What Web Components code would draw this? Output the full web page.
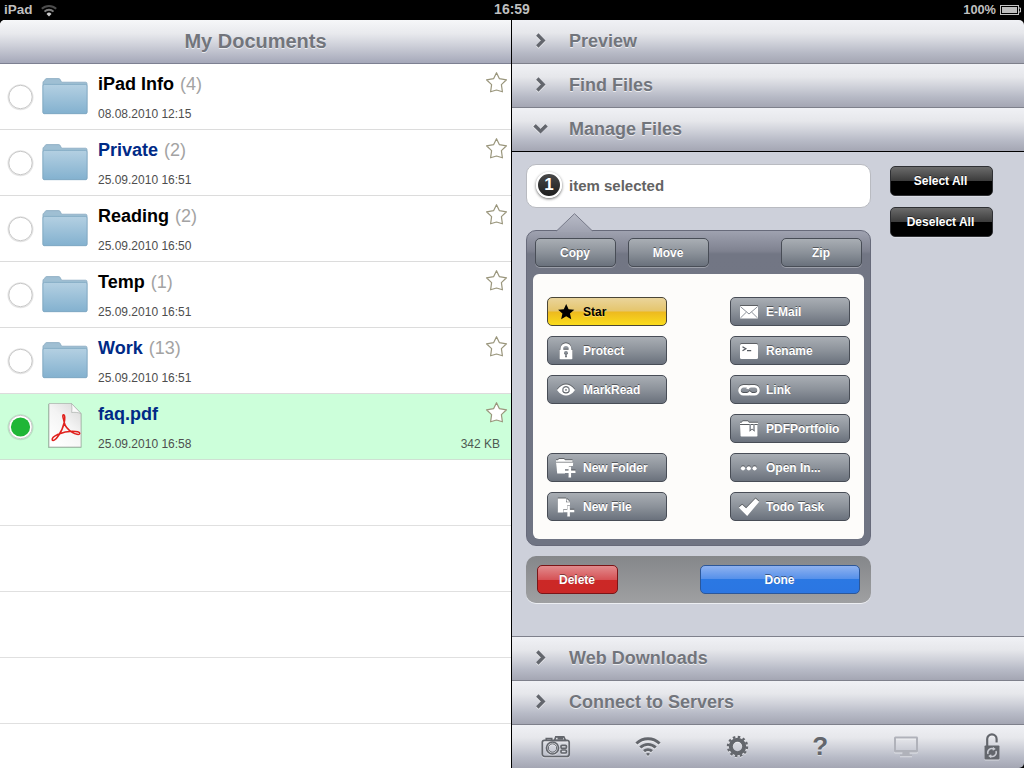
<!DOCTYPE html>
<html lang="en">
<head>
<meta charset="utf-8">
<title>My Documents</title>
<style>
  html, body {
    margin: 0;
    height: 100%;
    overflow: hidden;
    background: #000;
    font-family: "Liberation Sans", Arial, Helvetica, sans-serif;
  }
</style>
</head>
<body>

<file-manager></file-manager>

<script>

const ICONS = {
  star: `<path d="M10 1.200l2.600 5.700 6.200.6-4.700 4.100 1.400 6.200-5.500-3.300-5.500 3.300 1.400-6.200L1.200 7.500l6.200-.6z" transform="translate(1 .9) scale(.92)"/>`,
  lock: `<path d="M3.600 8.800h.9V7.600a5.400 5.400 0 0 1 10.800 0v1.200h1.100v8.400a1 1 0 0 1-1 1H4.600a1 1 0 0 1-1-1zM7.300 8.800h5.300V7.600a2.650 2.650 0 0 0-5.300 0zM8.100 12a1.900 1.900 0 0 0 1.100 1.700v2.500h1.600v-2.500A1.900 1.900 0 1 0 8.100 12z" fill-rule="evenodd"/>`,
  eye: `<path d="M1 10C4 5.800 7 4.400 10 4.400S16 5.800 19 10c-3 4.200-6 5.600-9 5.600S4 14.200 1 10zm5.200-.2a3.800 3.800 0 1 0 7.600 0 3.800 3.800 0 1 0-7.600 0z" fill-rule="evenodd"/><path d="M7.500 9.800a2.500 2.500 0 1 0 5 0 2.500 2.500 0 1 0-5 0zm1.600 0a.9.9 0 1 1 1.800 0 .9.9 0 1 1-1.800 0z" fill-rule="evenodd"/>`,
  newfolder: `<path d="M0 2.300h1.800L3 1h5l1.200 1.300h7.300v1.400H0zM0 4.600h17.200l-.3 3.300h-4v3.400H9v4.300H1.200z"/><path d="M12.500 8.400h2.600v4h4.400V15h-4.400v4.400h-2.600V15H8.800v-2.600h3.700z"/>`,
  newfile: `<path d="M1.800 1.500h8.200v3.800h4v3.200h-3v3.800H7.200v3.300H1.800z"/><path d="M10.700 1.800l3.200 2.900h-3.200zM11.300 9h2.600v3.700h4.400v2.500h-4.400v4.300h-2.600v-4.300H7.500v-2.500h3.800z"/>`,
  mail: `<rect x="1" y="4" width="18" height="12.500" rx=".6"/><path d="M1.400 4.600L10 12l8.600-7.400M1.400 16l6.100-6M18.600 16l-6.100-6" fill="none" stroke="#8a9098" stroke-width="1"/>`,
  terminal: `<rect x="1" y="3" width="18" height="15" rx="1.500"/><path d="M3.500 5.800l3.300 2-3.300 2M8 9.700h4.200" fill="none" stroke="#555a61" stroke-width="1.300"/>`,
  link: `<g fill="none" stroke="#fff" stroke-width="2.600"><path d="M10.500 7.300A3.900 3.900 0 0 0 8 6.300H4.500a4 4 0 0 0 0 8H8a3.900 3.900 0 0 0 3.400-2.600"/><path d="M9.300 13.300a3.900 3.900 0 0 0 2.500 1h3.700a4 4 0 0 0 0-8h-3.700a3.900 3.900 0 0 0-3.400 2.600"/></g>`,
  portfolio: `<path d="M1 3.700h1.500L3.800 2.300h5l1.300 1.400H19v1.400H1zM1 6h9.500v6.800l2.600-2.200 2.600 2.200V6H18.500v10.500a1 1 0 0 1-1 1H2.500a1 1 0 0 1-1-1z"/><path d="M12 6h2.300v4.600l-1.200-1-1.100 1z"/>`,
  dots: `<circle cx="4" cy="10.300" r="2.100"/><circle cx="9.800" cy="10.300" r="2.100"/><circle cx="15.600" cy="10.300" r="2.100"/>`,
  check: `<path d="M-.2 10.600l3.400-2.900 3.900 3.600L16.500 1.500l3.700 3.200-12 14.300z"/>`
};

// rail icons, drawn in currentColor
const RAIL_ICONS = {
  camera: `<svg width="30" height="24" viewBox="-1 0 30 24" fill="none" stroke="currentColor" stroke-width="1.700">
    <path d="M3.500 5.300h22.500a2.200 2.200 0 0 1 2.200 2.200v11.500a2.500 2.500 0 0 1-2.500 2.500H3.800A2.500 2.500 0 0 1 1.300 19V7.500a2.200 2.200 0 0 1 2.200-2.200zM5.300 5V3.500h5.400V5"/>
    <path d="M13.500 5.500l1.300-3.600h8L24.500 5.500zM16.500 3.700h5.500"/>
    <circle cx="11.500" cy="13" r="6"/><circle cx="11.500" cy="13" r="4.200" stroke-width="1"/>
    <rect x="20" y="10.300" width="5.400" height="3" rx="1"/><rect x="20" y="15" width="5.400" height="3" rx="1"/></svg>`,
  wifi: `<svg width="26" height="20" viewBox="-1 .5 26 20" fill="none" stroke="currentColor" stroke-width="2.900">
    <path d="M1.400 7a16.500 16.500 0 0 1 23.200 0M5.300 11a11 11 0 0 1 15.400 0M9 14.700a6 6 0 0 1 8 0"/>
    <path d="M13 19.500l-2-2.200a3 3 0 0 1 4 0z" fill="currentColor" stroke="none"/></svg>`,
  gear: `<svg width="22" height="22" viewBox="-12.500 -10.500 22 22" fill="none" stroke="currentColor">
    <circle r="6.700" stroke-width="4"/><circle r="9.500" stroke-width="2.400" stroke-dasharray="2.500 2.474"/></svg>`,
  monitor: `<svg width="26" height="22" viewBox="0 .5 26 22">
    <path d="M2.500 1h21A1.500 1.500 0 0 1 25 2.500v13a1.500 1.500 0 0 1-1.500 1.500h-7l.4 2h2.100v1.800H7V19h2.100l.4-2h-7A1.500 1.500 0 0 1 1 15.500v-13A1.500 1.500 0 0 1 2.500 1zM3 3v11.500h20V3z" fill="currentColor" fill-rule="evenodd"/></svg>`,
  unlock: `<svg width="18" height="28" viewBox="0 .5 18 28" fill="none" stroke="currentColor">
    <path d="M4.200 14V6.500a4.700 4.700 0 0 1 9.400 0V10" stroke-width="2.200"/>
    <rect x="1.500" y="13" width="15" height="14" rx="1" fill="currentColor" stroke="none"/>
    <g stroke="#c9cbd2" stroke-width="1.500"><path d="M5 21.500a4 4 0 0 1 5.500-5M13 18.500a4 4 0 0 1-5.500 5"/></g>
    <path d="M9.800 14.200l3 2.300-3 1.800zM8.200 25.800l-3-2.300 3-1.800z" fill="#c9cbd2" stroke="none"/></svg>`
};

class StatusBar extends HTMLElement {
  constructor() {
    super();
    this.attachShadow({mode: 'open'}).innerHTML = `
      <style>
        :host {
          display: grid;
          grid-template-columns: 1fr auto 1fr;
          align-items: center;
          height: 20px;
          background: #000;
          color: #bfbfbf;
          font: bold 14px/19px "Liberation Sans", Arial, sans-serif;
        }
        .mid { padding-bottom: 1px; }
        .side { display: flex; align-items: center; padding-left: 4px; gap: 8px; font-size: 13.500px; }
        .side span { padding-bottom: 1px; }
        .right { justify-content: flex-end; padding: 0 3px 0 0; gap: 4px; font-size: 12.800px; }
        svg { display: block; }
      </style>
      <div class="side">
        <span>iPad</span>
        <svg width="18" height="13" viewBox="1 .5 18 13" fill="none" stroke-width="2">
          <path d="M1.800 5.300a10.500 10.500 0 0 1 14.400 0" stroke="#4d4d4d"/>
          <path d="M4.500 8.100a6.500 6.500 0 0 1 9 0" stroke="#7c7c7c"/>
          <path d="M9 13l-2.500-2.600a3.500 3.500 0 0 1 5 0z" fill="#ccc"/>
        </svg>
      </div>
      <span class="mid">16:59</span>
      <div class="side right">
        <span>100%</span>
        <svg width="21" height="11" viewBox="0 1 21 11">
          <rect x=".5" y="1.500" width="18" height="9" fill="none" stroke="#c4c4c4"/>
          <rect x="2" y="3" width="15" height="6" fill="#bdbdbd"/>
          <path d="M19 4h1.500v4H19" fill="none" stroke="#c4c4c4"/>
        </svg>
      </div>
    `;
  }
}
customElements.define('status-bar', StatusBar);


class FileRow extends HTMLElement {
  connectedCallback() {
    const count = this.getAttribute('count');
    const isPdf = this.getAttribute('kind') === 'pdf';
    this.attachShadow({mode: 'open'}).innerHTML = `
      <style>
        :host {
          display: flex;
          align-items: flex-start;
          box-sizing: border-box;
          height: 66px;
          border-bottom: 1px solid #dcdcdc;
          background: #fff;
        }
        :host([selected]) { background: #ccffda; border-bottom-color: #cfe0d3; }
        .radio { flex: none; margin: 19px 0 0 6px; }
        .thumb { flex: none; width: 48px; margin: 12px 0 0 6px; }
        .thumb svg { display: block; }
        .info { flex: 1; padding: 10px 0 0 9px; }
        .name { font: bold 18px/20px "Liberation Sans", Arial, sans-serif; color: #000; white-space: nowrap; }
        :host([unread]) .name { color: #002a86; }
        .name i { font-style: normal; font-weight: normal; color: #a3a3a3; margin-left: 1px; }
        .meta { display: flex; margin-top: 13px; font-size: 12px; line-height: 14px; color: #4e4e4e; }
        .side { width: 52px; text-align: right; padding: 7px 3px 0 0; box-sizing: border-box; }
        .size { font-size: 12px; line-height: 14px; color: #4e5a52; padding: 13px 8px 0 0; white-space: nowrap; }
        .side svg { display: block; margin-left: auto; }
      </style>
      <svg class="radio" width="29" height="30" viewBox="0 0 29 30">
        <circle cx="14.500" cy="14.300" r="12.300" fill="none" stroke="#000" stroke-opacity=".1" stroke-width="1.500"/>
        <circle cx="14.500" cy="14" r="11.700" fill="#fff" stroke="#c8c8c8" stroke-width="1"/>
        ${ this.hasAttribute('selected') ? '<circle cx="14.500" cy="14" r="9.600" fill="#1fb636"/>' : '' }
      </svg>
      <div class="thumb">${ isPdf ? this.pdf() : this.folder() }</div>
      <div class="info">
        <div class="name"><slot></slot>${ count ? ` <i>(${ count })</i>` : '' }</div>
        <div class="meta"><span>${ this.getAttribute('date') }</span></div>
      </div>
      <div class="side">
        <svg width="23" height="23" viewBox="0 0 23 23">
          <path d="M11.500 1.700l2.800 5.900 7.200 1.200-5.100 4.800 1 7.200-5.900-1.800-5.900 1.800 1-7.200-5.100-4.800 7.200-1.200z" fill="#fff" stroke="#9a967c" stroke-width="1.200" stroke-linejoin="round"/>
        </svg>
        ${ this.hasAttribute('size') ? `<div class="size">${ this.getAttribute('size') }</div>` : '' }
      </div>
    `;
  }

  folder() {
    return `
      <svg width="47" height="40" viewBox="0 0 48 40" preserveAspectRatio="none">
        <defs>
          <linearGradient id="f" x2="0" y2="1"><stop offset="0" stop-color="#b4d0e2"/><stop offset="1" stop-color="#83b1cf"/></linearGradient>
        </defs>
        <path d="M2 10V6.500a1.500 1.500 0 0 1 1.500-1.500l.8-1.600A1.500 1.500 0 0 1 5.700 2.600h12.500a1.500 1.500 0 0 1 1.300.8L21 6.200h24.500a1.500 1.500 0 0 1 1.500 1.500V36a1.500 1.500 0 0 1-1.500 1.500h-42A1.500 1.500 0 0 1 2 36z" fill="#9fbfd3" stroke="#86a9bf" stroke-width=".8"/>
        <path d="M2 10a1.500 1.500 0 0 1 1.500-1.600h42A1.500 1.500 0 0 1 47 10v26.200a1.500 1.500 0 0 1-1.500 1.500h-42A1.500 1.500 0 0 1 2 36.200z" fill="url(#f)" stroke="#7fa8c2" stroke-width=".8"/>
      </svg>`;
  }

  pdf() {
    return `
      <svg width="48" height="48" viewBox="0 -3 48 48" style="margin-top:-6px">
        <defs>
          <linearGradient id="p" x1="1" y1="0" x2=".3" y2="1"><stop offset="0" stop-color="#d6d6d6"/><stop offset=".5" stop-color="#f4f4f4"/><stop offset="1" stop-color="#fff"/></linearGradient>
        </defs>
        <path d="M7 1h23l10.500 10.500V45H7z" fill="#000" opacity=".22"/>
        <path d="M8 .5h22.500l9.500 10V44H8z" fill="url(#p)" stroke="#a9afaa" stroke-width=".7"/>
        <path d="M30.500.5c.5 3 .6 6 .2 9 3-.4 6-.2 9.300 1z" fill="#fafafa" stroke="#a9afaa" stroke-width=".7"/>
        <g fill="none" stroke="#e0201c" stroke-width="1.500">
          <path d="M23.200 19.500c-.5-3.300-2.300-7.500-.9-7.800 1.900-.2 1.700 4.500.9 7.800-1 4.500-3 9.600-6 13.500-2.300 3.600-5.300 5.400-6 3.900-.5-1.700 3-4.200 6-5.600 5-2 10-2.900 14-3 4.500 0 7.800.6 7.600 2.300-.5 1.600-4.400.6-7.600-1.300-4-2.400-7-5.600-8-9.800z"/>
        </g>
      </svg>`;
  }
}
customElements.define('file-row', FileRow);


class AccordionBar extends HTMLElement {
  constructor() {
    super();
    this.attachShadow({mode: 'open'}).innerHTML = `
      <style>
        :host {
          display: flex;
          align-items: center;
          box-sizing: border-box;
          height: 44px;
          border-bottom: 1px solid #7e808b;
          background: linear-gradient(#f0f1f5, #e6e7eb 30%, #d0d2da 52%, #b7bac6 76%, #a4a6b3);
          color: #72757c;
          font: bold 18px/20px "Liberation Sans", Arial, sans-serif;
          text-shadow: 0 1px 0 rgba(255, 255, 255, .7);
        }
        :host([open]) { border-bottom-color: #000; }
        svg { margin: 0 19px 2px 19px; filter: drop-shadow(0 1px 0 rgba(255, 255, 255, .6)); }
        :host([open]) svg { transform: rotate(90deg); }
        span { margin-bottom: 1px; }
      </style>
      <svg width="19" height="19" viewBox="0 0 19 19"><path d="M6.300 3.500l5.900 6-5.900 6" fill="none" stroke="#63666d" stroke-width="3.300"/></svg>
      <span><slot></slot></span>
    `;
  }
}
customElements.define('accordion-bar', AccordionBar);


class GlossButton extends HTMLElement {
  connectedCallback() {
    const icon = ICONS[this.getAttribute('icon')];
    this.attachShadow({mode: 'open'}).innerHTML = `
      <style>
        :host {
          display: flex;
          flex: none;
          align-items: center;
          justify-content: center;
          box-sizing: border-box;
          width: 81px;
          height: 29px;
          padding-right: 1px;
          border: 1px solid #484d56;
          border-radius: 5px;
          background: linear-gradient(#a9aeb4, #8c929a 50%, #6a717c);
          box-shadow: 0 1px 0 rgba(255, 255, 255, .3);
          color: #fff;
          fill: #fff;
          font: bold 12px/14px "Liberation Sans", Arial, sans-serif;
          text-shadow: 0 -1px 0 rgba(0, 0, 0, .45);
          white-space: nowrap;
        }
        :host([icon]) { width: 120px; justify-content: flex-start; }
        :host([tone="gold"]) {
          background: linear-gradient(#ead49b, #e5c56b 49%, #edb91f 51%, #fadc1c);
          border-color: #4a4638; color: #000; fill: #000; text-shadow: 0 1px 0 rgba(255, 255, 255, .35);
        }
        :host([tone="black"]) {
          width: 103px; height: 30px;
          padding-right: 2px;
          background: linear-gradient(#6b6b6b, #3c3c3c 49%, #000 51%);
          border-color: #2f3034;
        }
        :host([tone="red"]) { background: linear-gradient(#e28b8d, #d65356 50%, #cc2826 51%, #cb2826); border-color: #7a1517; box-shadow: none; }
        :host([tone="blue"]) { width: 160px; background: linear-gradient(#8fb2f0, #5590ea 48%, #2b78e3 49%, #2b76e2); border-color: #2c5799; box-shadow: none; }
        svg { flex: none; margin: 0 7px 0 8px; overflow: visible; filter: drop-shadow(0 -1px 0 rgba(0, 0, 0, .4)); }
        :host([tone="gold"]) svg { filter: none; }
      </style>
      ${ icon ? `<svg width="20" height="20" viewBox="0 0 20 20">${ icon }</svg>` : '' }
      <span><slot></slot></span>
    `;
  }
}
customElements.define('gloss-button', GlossButton);


class ActionPopover extends HTMLElement {
  constructor() {
    super();
    this.attachShadow({mode: 'open'}).innerHTML = `
      <style>
        :host {
          display: block;
          position: relative;
          box-sizing: border-box;
          height: 316px;
          border: 1px solid #676a7a;
          border-radius: 10px;
          background: linear-gradient(#9fa2b0, #7f8290 20px, #727684 23px, #6f7483);
          padding: 7px 6px 6px;
        }
        .arrow { position: absolute; left: 29px; top: -18px; }
        .tabs { display: flex; gap: 12px; padding: 0 2px; }
        .body {
          display: flex;
          justify-content: space-between;
          box-sizing: border-box;
          margin-top: 7px;
          height: 265px;
          padding: 23px 14px 0;
          border-radius: 6px;
          background: #fdfcfa;
        }
        .col { display: flex; flex-direction: column; gap: 10px; }
      </style>
      <svg class="arrow" width="37" height="19" viewBox="0 0 37 19">
        <defs><linearGradient id="a" x2="0" y2="1"><stop offset="0" stop-color="#b8bbc7"/><stop offset="1" stop-color="#9fa2b0"/></linearGradient></defs>
        <path d="M.5 18L18.500.700 36.500 18v1H.5z" fill="url(#a)"/>
        <path d="M.5 18L18.500.700 36.500 18" fill="none" stroke="#777a89"/>
      </svg>
      <div class="tabs"><slot name="tabs"></slot></div>
      <div class="body">
        <div class="col"><slot name="left"></slot></div>
        <div class="col"><slot name="right"></slot></div>
      </div>
    `;
  }
}
customElements.define('action-popover', ActionPopover);


class ManagePanel extends HTMLElement {
  constructor() {
    super();
    this.attachShadow({mode: 'open'}).innerHTML = `
      <style>
        :host {
          display: flex;
          box-sizing: border-box;
          flex: 1;
          gap: 19px;
          padding: 12px 0 0 14px;
          background: #cdd0da;
          border-bottom: 1px solid #7e808b;
        }
        .main { width: 345px; display: flex; flex-direction: column; }
        .selection {
          display: flex;
          align-items: center;
          box-sizing: border-box;
          height: 44px;
          padding-left: 9px;
          gap: 7px;
          border: 1px solid #b9bbc1;
          border-radius: 10px;
          background: #fff;
          color: #636363;
          font: bold 15px/18px "Liberation Sans", Arial, sans-serif;
        }
        .badge {
          box-sizing: border-box;
          width: 26px;
          height: 26px;
          margin-bottom: 2px;
          border: 2px solid #fff;
          border-radius: 50%;
          background: linear-gradient(#484848, #1e1e1e);
          box-shadow: 0 1px 3px rgba(0, 0, 0, .6);
          color: #fff;
          font-size: 17px;
          line-height: 22px;
          text-align: center;
        }
        action-popover { margin-top: 22px; }
        .footer {
          display: flex;
          justify-content: space-between;
          box-sizing: border-box;
          height: 47px;
          margin-top: 10px;
          padding: 9px 11px;
          border-radius: 10px;
          background: linear-gradient(#85878a, #9fa0a2);
          box-shadow: 0 1px 0 #eceef2;
        }
        .side { display: flex; flex-direction: column; gap: 11px; padding-top: 2px; }
        .space { flex: none; height: 29px; }
        .zip { margin-left: auto; }
      </style>
      <div class="main">
        <div class="selection"><span class="badge">1</span><span>item selected</span></div>
        <action-popover>
          <gloss-button slot="tabs">Copy</gloss-button>
          <gloss-button slot="tabs">Move</gloss-button>
          <gloss-button slot="tabs" class="zip">Zip</gloss-button>
          <gloss-button slot="left" icon="star" tone="gold">Star</gloss-button>
          <gloss-button slot="left" icon="lock">Protect</gloss-button>
          <gloss-button slot="left" icon="eye">MarkRead</gloss-button>
          <div slot="left" class="space"></div>
          <gloss-button slot="left" icon="newfolder">New Folder</gloss-button>
          <gloss-button slot="left" icon="newfile">New File</gloss-button>
          <gloss-button slot="right" icon="mail">E-Mail</gloss-button>
          <gloss-button slot="right" icon="terminal">Rename</gloss-button>
          <gloss-button slot="right" icon="link">Link</gloss-button>
          <gloss-button slot="right" icon="portfolio">PDFPortfolio</gloss-button>
          <gloss-button slot="right" icon="dots">Open In...</gloss-button>
          <gloss-button slot="right" icon="check">Todo Task</gloss-button>
        </action-popover>
        <div class="footer">
          <gloss-button tone="red">Delete</gloss-button>
          <gloss-button tone="blue">Done</gloss-button>
        </div>
      </div>
      <div class="side">
        <gloss-button tone="black">Select All</gloss-button>
        <gloss-button tone="black">Deselect All</gloss-button>
      </div>
    `;
  }
}
customElements.define('manage-panel', ManagePanel);


class ToolRail extends HTMLElement {
  constructor() {
    super();
    this.attachShadow({mode: 'open'}).innerHTML = `
      <style>
        :host {
          display: flex;
          align-items: center;
          justify-content: space-between;
          box-sizing: border-box;
          height: 43px;
          padding: 0 23px 0 28px;
          background: linear-gradient(#f0f1f5, #e6e7eb 30%, #d0d2da 52%, #b7bac6 76%, #a4a6b3);
          border-bottom-right-radius: 5px;
          color: #63666c;
        }
        svg { display: block; overflow: visible; filter: drop-shadow(0 1px 0 rgba(255, 255, 255, .5)); }
        .off { color: #b0b2ba; }
        .help { font: bold 26px/28px "Liberation Sans", Arial, sans-serif; padding: 0 0 1px 1px; text-shadow: 0 1px 0 rgba(255, 255, 255, .5); }
      </style>
      ${ RAIL_ICONS.camera }
      ${ RAIL_ICONS.wifi }
      ${ RAIL_ICONS.gear }
      <span class="help">?</span>
      <span class="off">${ RAIL_ICONS.monitor }</span>
      ${ RAIL_ICONS.unlock }
    `;
  }
}
customElements.define('tool-rail', ToolRail);


class FileManager extends HTMLElement {
  constructor() {
    super();
    this.attachShadow({mode: 'open'}).innerHTML = `
      <style>
        :host { display: flex; flex-direction: column; width: 1024px; height: 768px; overflow: hidden; }
        .panes { flex: 1; display: flex; gap: 1px; background: #000; }
        .list { width: 511px; height: 748px; overflow: hidden; background: #fff; border-top-left-radius: 5px; }
        .list h1 {
          box-sizing: border-box;
          margin: 0;
          height: 44px;
          border-bottom: 1px solid #7d8092;
          background: linear-gradient(#f6f7f9, #e8e9ed 32%, #cfd1da 58%, #a5a8b9);
          color: #72757c;
          font: bold 20px/43px "Liberation Sans", Arial, sans-serif;
          text-align: center;
          text-shadow: 0 1px 0 rgba(255, 255, 255, .7);
        }
        .blank { box-sizing: border-box; height: 66px; border-bottom: 1px solid #e0e0e0; }
        .detail { flex: 1; display: flex; flex-direction: column; }
        accordion-bar:first-child { border-top-right-radius: 5px; }
      </style>
      <status-bar></status-bar>
      <div class="panes">
        <section class="list">
          <h1>My Documents</h1>
          <file-row count="4" date="08.08.2010 12:15">iPad Info</file-row>
          <file-row count="2" date="25.09.2010 16:51" unread>Private</file-row>
          <file-row count="2" date="25.09.2010 16:50">Reading</file-row>
          <file-row count="1" date="25.09.2010 16:51">Temp</file-row>
          <file-row count="13" date="25.09.2010 16:51" unread>Work</file-row>
          <file-row kind="pdf" date="25.09.2010 16:58" size="342 KB" unread selected>faq.pdf</file-row>
          <div class="blank"></div>
          <div class="blank"></div>
          <div class="blank"></div>
          <div class="blank"></div>
        </section>
        <section class="detail">
          <accordion-bar>Preview</accordion-bar>
          <accordion-bar>Find Files</accordion-bar>
          <accordion-bar open>Manage Files</accordion-bar>
          <manage-panel></manage-panel>
          <accordion-bar>Web Downloads</accordion-bar>
          <accordion-bar>Connect to Servers</accordion-bar>
          <tool-rail></tool-rail>
        </section>
      </div>
    `;
  }
}
customElements.define('file-manager', FileManager);

</script>
</body>
</html>
